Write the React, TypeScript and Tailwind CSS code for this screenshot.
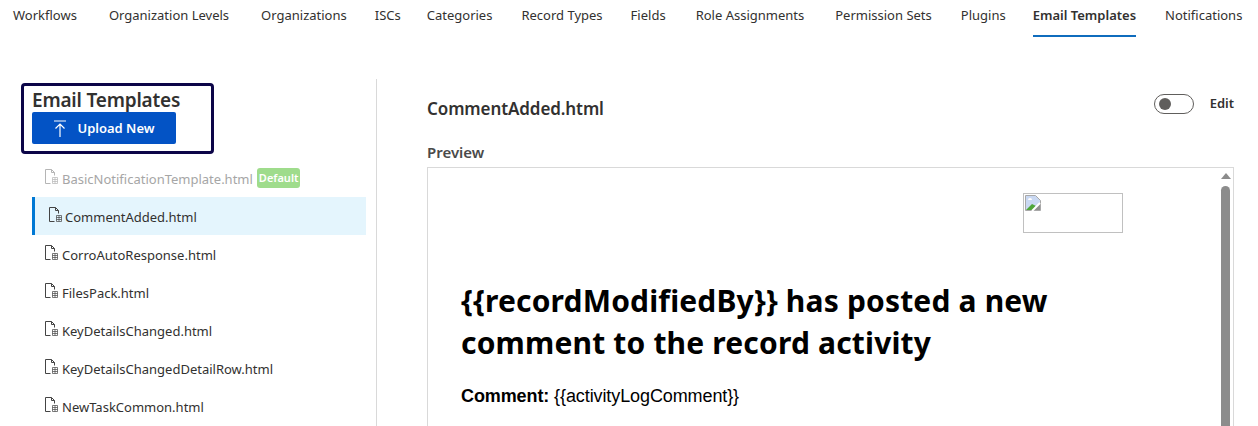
const tabs = [
  { label: 'Workflows', gap: '' },
  { label: 'Organization Levels', gap: 'ml-[32px]' },
  { label: 'Organizations', gap: 'ml-[32px]' },
  { label: 'ISCs', gap: 'ml-[28px]' },
  { label: 'Categories', gap: 'ml-[26px]' },
  { label: 'Record Types', gap: 'ml-[29px]' },
  { label: 'Fields', gap: 'ml-[28px]' },
  { label: 'Role Assignments', gap: 'ml-[30px]' },
  { label: 'Permission Sets', gap: 'ml-[31px]' },
  { label: 'Plugins', gap: 'ml-[29px]' },
  { label: 'Email Templates', gap: 'ml-[27px]' },
  { label: 'Notifications', gap: 'ml-[29px]' },
]

const files = [
  'CorroAutoResponse.html',
  'FilesPack.html',
  'KeyDetailsChanged.html',
  'KeyDetailsChangedDetailRow.html',
  'NewTaskCommon.html',
]

function FileIcon({ muted = false }: { muted?: boolean }) {
  const stroke = muted ? '#b5b5b5' : '#444444'
  return (
    <svg width="15" height="15" viewBox="0 0 15 15" fill="none" className="shrink-0 -mt-[3px]">
      <path d="M1.5 14.5V.5h6l3 3v3M7.5.5v3h3M1.5 14.5h5" stroke={stroke} />
      <path d="M8.5 8.5h5v6h-5zM11 8.5v6M8.5 10.5h5M8.5 12.5h5" stroke={stroke} strokeWidth="0.7" />
    </svg>
  )
}

function BrokenImage() {
  return (
    <svg width="16" height="16" viewBox="0 0 16 16" className="ml-px mt-px">
      <path d="M.5.5h10l5 5v10H.5z" fill="#c9d8f2" stroke="#a8a8a8" />
      <path d="M1 15l6-6 4 2-3 4z" fill="#4ea63a" />
      <path d="M8 15l7-7v7z" fill="#8f8f8f" />
      <path d="M7 16l8-8" stroke="#ffffff" strokeWidth="2" />
      <path d="M3 5a2 2 0 0 1 4 0z" fill="#ffffff" />
    </svg>
  )
}

export default function App() {
  return (
    <div
      className="w-[1258px] h-[426px] overflow-hidden bg-white text-[#323130]"
      style={{ fontFamily: '"Noto Sans", sans-serif' }}
    >
      {/* Tab bar */}
      <div className="flex pl-[13px] h-[37px] whitespace-nowrap text-[13px]">
        {tabs.map((tab) => (
          <div
            key={tab.label}
            className={
              tab.label === 'Email Templates'
                ? `${tab.gap} h-[37px] pt-[6px] font-semibold border-b-2 border-[#0f6cbd]`
                : `${tab.gap} h-[37px] pt-[6px]`
            }
          >
            {tab.label}
          </div>
        ))}
      </div>

      <div className="flex mt-[42px]">
        {/* Template list */}
        <div className="w-[377px] h-[347px] shrink-0 border-r border-[#d9d9d9] pl-[32px] pr-[10px]">
          <div className="w-[193px] h-[71px] -ml-[11px] mt-[4px] border-[3px] border-[#0c0548] rounded-[4px] pl-[8px]">
            <div className="text-[19px] leading-[24px] font-semibold tracking-[-0.2px] mt-[2px]">Email Templates</div>
            <button className="flex items-center justify-center gap-[10px] w-[144px] h-[32px] bg-[#0353c5] text-white text-[13px] font-semibold rounded-[2px]">
              <svg width="14" height="17" viewBox="0 0 14 17" fill="none" stroke="#ffffff" strokeWidth="1.2">
                <path d="M1 1h12M7 17V4M2.5 8.5 7 4l4.5 4.5" />
              </svg>
              <span className="pt-[1px]">Upload New</span>
            </button>
          </div>

          <div className="flex items-center h-[38px] mt-[5px] pl-[12px] gap-[3px] text-[13px] text-[#a6a6a6]">
            <FileIcon muted />
            <span className="pt-[3px]">BasicNotificationTemplate.html</span>
            <span className="ml-[1px] px-[2px] h-[20px] leading-[20px] bg-[#9fdc8c] text-white text-[11px] font-semibold rounded-[3px]">
              Default
            </span>
          </div>
          <div className="flex items-center h-[38px] pl-[13px] gap-[2px] text-[13px] bg-[#e4f5fd] border-l-[3px] border-[#0078d4]">
            <FileIcon />
            <span className="pt-[3px]">CommentAdded.html</span>
          </div>
          {files.map((file) => (
            <div key={file} className="flex items-center h-[38px] pl-[12px] gap-[3px] text-[13px]">
              <FileIcon />
              <span className="pt-[3px]">{file}</span>
            </div>
          ))}
        </div>

        {/* Preview */}
        <div className="w-[807px] ml-[50px] shrink-0">
          <div className="flex items-center justify-between h-[60px]">
            <div className="text-[17px] font-semibold tracking-[-0.1px]">CommentAdded.html</div>
            <div className="flex items-center gap-[16px] mb-[10px]">
              <div className="flex items-center w-[40px] h-[20px] border border-[#605e5c] rounded-full pl-[4px]">
                <div className="w-[12px] h-[12px] rounded-full bg-[#605e5c]" />
              </div>
              <span className="text-[13px] font-semibold">Edit</span>
            </div>
          </div>
          <div className="text-[15px] leading-[20px] font-semibold text-[#4a4a4a] h-[28px] pt-[3px]">Preview</div>
          <div className="relative h-[300px] border border-[#d9d9d9] text-black">
            <div className="absolute right-[3px] top-[5px] w-[9px]">
              <div className="w-0 h-0 mx-auto border-x-[5px] border-x-transparent border-b-[6px] border-b-[#8c8c8c]" />
              <div className="w-[9px] h-[300px] mt-[7px] rounded-full bg-[#8c8c8c]" />
            </div>
            <div className="w-[100px] h-[40px] border border-[#c0c0c0] ml-[595px] mt-[25px]">
              <BrokenImage />
            </div>
            <h1 className="ml-[33px] mt-[47px] w-[680px] text-[30px] leading-[42px] font-bold tracking-[0.17px]">
              {'{{recordModifiedBy}} has posted a new comment to the record activity'}
            </h1>
            <p
              className="ml-[33px] mt-[20px] text-[18px] leading-[24px] tracking-[-0.1px]"
              style={{ fontFamily: '"Liberation Sans", sans-serif' }}
            >
              <b>Comment:</b> {'{{activityLogComment}}'}
            </p>
          </div>
        </div>
      </div>
    </div>
  )
}
